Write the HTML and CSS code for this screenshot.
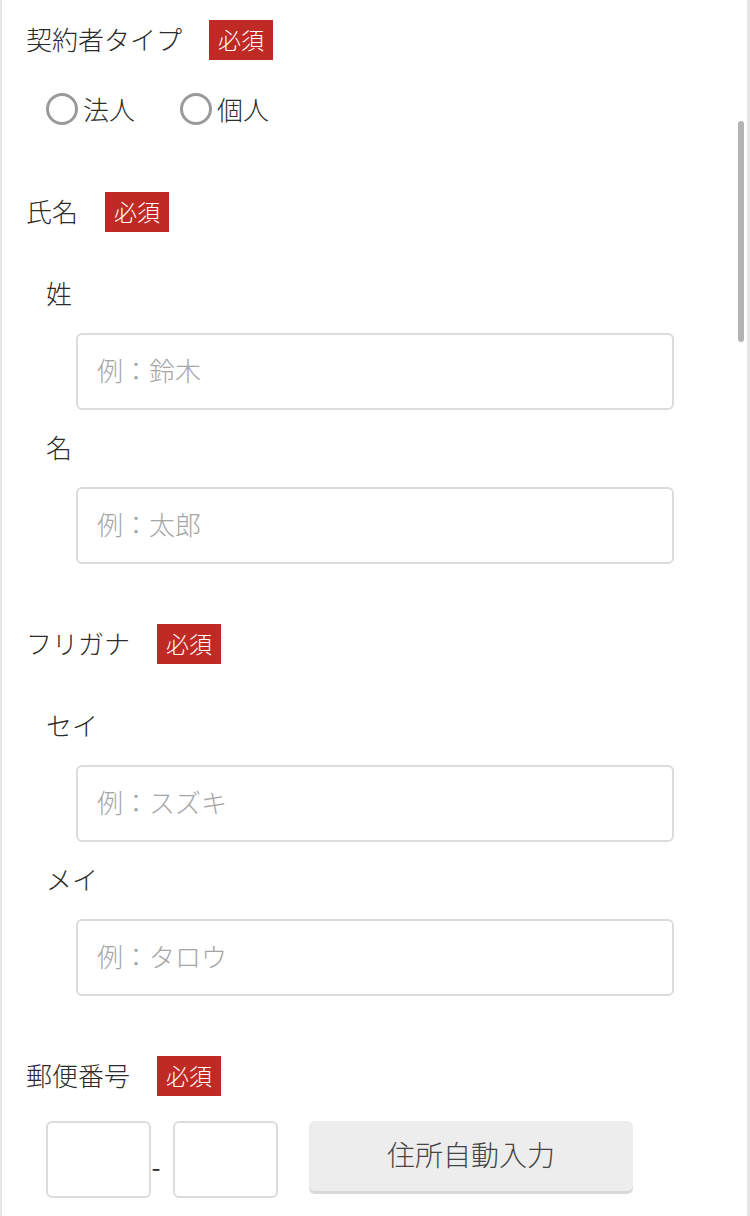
FILE: index.html
```html
<!DOCTYPE html>
<html lang="ja">
<head>
<meta charset="utf-8">
<title>フォーム</title>
<link rel="stylesheet" href="styles.css">
</head>
<body>
<div class="page">
  <section class="field">
    <div class="field-head"><span class="field-title">契約者タイプ</span><span class="badge">必須</span></div>
    <div class="radio-row">
      <label class="radio"><input type="radio" name="type"><span>法人</span></label>
      <label class="radio"><input type="radio" name="type"><span>個人</span></label>
    </div>
  </section>

  <section class="field field-gap-lg">
    <div class="field-head"><span class="field-title">氏名</span><span class="badge">必須</span></div>
    <div class="sub-label first">姓</div>
    <input class="text-input" type="text" placeholder="例：鈴木">
    <div class="sub-label">名</div>
    <input class="text-input" type="text" placeholder="例：太郎">
  </section>

  <section class="field field-gap">
    <div class="field-head"><span class="field-title">フリガナ</span><span class="badge">必須</span></div>
    <div class="sub-label first">セイ</div>
    <input class="text-input" type="text" placeholder="例：スズキ">
    <div class="sub-label">メイ</div>
    <input class="text-input" type="text" placeholder="例：タロウ">
  </section>

  <section class="field field-gap">
    <div class="field-head"><span class="field-title">郵便番号</span><span class="badge">必須</span></div>
    <div class="zip-row">
      <input class="zip-input" type="text">
      <span class="zip-dash">-</span>
      <input class="zip-input" type="text">
      <button class="zip-button" type="button">住所自動入力</button>
    </div>
  </section>

  <div class="scrollbar"></div>
</div>
</body>
</html>
```

FILE: styles.css
```css
html, body {
  margin: 0;
  padding: 0;
  background: #ffffff;
}

body {
  font-family: "Noto Sans CJK JP", "Noto Sans", sans-serif;
  font-weight: 300;
  color: #2b2b2b;
}

.page {
  position: relative;
  box-sizing: border-box;
  width: 750px;
  min-height: 1216px;
  border-left: 2px solid #e6e6e6;
  border-right: 3px solid #e6e6e6;
  padding: 20px 0 0 24px;
  overflow: hidden;
}

.field-head {
  display: flex;
  align-items: center;
  height: 40px;
}

.field-title {
  font-size: 26px;
  line-height: 38px;
  margin-bottom: 2px;
  color: #2b2b2b;
}

.badge {
  margin-left: 27px;
  height: 40px;
  padding: 0 9px;
  background: #bf2a25;
  color: #ffffff;
  font-size: 23px;
  line-height: 39px;
}

.radio-row {
  display: flex;
  align-items: center;
  margin: 33px 0 0 20px;
  height: 32px;
}

.radio {
  display: flex;
  align-items: center;
  margin-right: 45px;
  font-size: 26px;
  line-height: 32px;
  color: #2b2b2b;
}

.radio span {
  margin-bottom: 1px;
}

.radio input {
  appearance: none;
  -webkit-appearance: none;
  box-sizing: border-box;
  width: 32px;
  height: 32px;
  margin: 0 5px 0 0;
  border: 3px solid #9a9a9a;
  border-radius: 50%;
  background: #ffffff;
}

.field-gap-lg {
  margin-top: 67px;
}

.field-gap {
  margin-top: 60px;
}

.sub-label {
  margin: 19px 0 0 20px;
  height: 40px;
  font-size: 26px;
  line-height: 36px;
  color: #2b2b2b;
}

.sub-label.first {
  margin-top: 43px;
}

.text-input {
  display: block;
  box-sizing: border-box;
  width: 598px;
  height: 77px;
  margin: 18px 0 0 50px;
  padding: 0 19px 5px;
  border: 2px solid #dcdcdc;
  border-radius: 6px;
  background: #ffffff;
  font-family: "Noto Sans CJK JP", "Noto Sans", sans-serif;
  font-weight: 300;
  font-size: 26px;
  color: #2b2b2b;
  outline: none;
}

.text-input::placeholder {
  color: #a6a6a6;
}

.zip-row {
  display: flex;
  align-items: flex-start;
  margin: 25px 0 0 20px;
}

.zip-input {
  box-sizing: border-box;
  width: 105px;
  height: 77px;
  margin: 0;
  border: 2px solid #dcdcdc;
  border-radius: 6px;
  background: #ffffff;
  outline: none;
}

.zip-dash {
  width: 10px;
  margin: 0 12px 0 0;
  padding-top: 25px;
  font-size: 26px;
  font-weight: 400;
  line-height: 40px;
  color: #333333;
  text-align: center;
}

.zip-button {
  box-sizing: border-box;
  width: 324px;
  height: 70px;
  margin: 0 0 0 31px;
  padding: 0 0 4px;
  border: none;
  border-radius: 6px;
  background: #ededed;
  box-shadow: 0 3px 0 #d9d9d9;
  font-family: "Noto Sans CJK JP", "Noto Sans", sans-serif;
  font-weight: 300;
  font-size: 28px;
  color: #444444;
}

.scrollbar {
  position: absolute;
  top: 121px;
  right: 3px;
  width: 6px;
  height: 221px;
  border-radius: 3px;
  background: #b3b3b3;
}
```
